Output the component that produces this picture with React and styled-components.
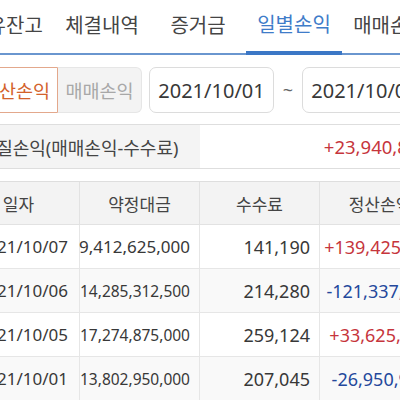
import React from 'react'
import styled, { createGlobalStyle } from 'styled-components'

const GlobalStyle = createGlobalStyle`
  *, *::before, *::after {
    box-sizing: border-box;
  }
  body {
    margin: 0;
    background: #fff;
    font-family: "Noto Sans", "Noto Sans CJK KR", sans-serif;
  }
`

const tabs = ['보유잔고', '체결내역', '증거금', '일별손익', '매매손익']

const rows = [
  { date: '2021/10/07', amount: '9,412,625,000', amountSize: 17, fee: '141,190', pnl: '+139,425,310', up: true },
  { date: '2021/10/06', amount: '14,285,312,500', amountSize: 15.5, fee: '214,280', pnl: '-121,337,460', up: false },
  { date: '2021/10/05', amount: '17,274,875,000', amountSize: 15.5, fee: '259,124', pnl: '+33,625,876', up: true },
  { date: '2021/10/01', amount: '13,802,950,000', amountSize: 15.5, fee: '207,045', pnl: '-26,950,955', up: false },
]

export default function App() {
  return (
    <Viewport>
      <GlobalStyle />
      <Screen>
        <TabBar>
          {tabs.map(t => (
            <Tab key={t} active={t === '일별손익'}>{t}</Tab>
          ))}
        </TabBar>

        <Controls>
          <Segment>
            <SegButton active>정산손익</SegButton>
            <SegButton>매매손익</SegButton>
          </Segment>
          <DateBox>2021/10/01</DateBox>
          <Tilde>~</Tilde>
          <DateBox>2021/10/07</DateBox>
        </Controls>

        <Summary>
          <SummaryLabel>실질손익(매매손익-수수료)</SummaryLabel>
          <SummaryValue>+23,940,843</SummaryValue>
        </Summary>

        <Table>
          <HeadRow>
            <HeadCell>일자</HeadCell>
            <HeadCell>약정대금</HeadCell>
            <HeadCell>수수료</HeadCell>
            <HeadCell>정산손익</HeadCell>
          </HeadRow>
          {rows.map((r, i) => (
            <Row key={r.date} shade={i % 2 === 1}>
              <DateCell>{r.date}</DateCell>
              <NumCell size={r.amountSize}>{r.amount}</NumCell>
              <NumCell size={18}>{r.fee}</NumCell>
              <PnlCell up={r.up}>{r.pnl}</PnlCell>
            </Row>
          ))}
        </Table>
      </Screen>
    </Viewport>
  )
}

const Viewport = styled.div`
  width: 400px;
  height: 400px;
  overflow: hidden;
`

const Screen = styled.div`
  width: 482px;
  margin-left: -42px;
  display: flex;
  flex-direction: column;
`

const TabBar = styled.div`
  display: flex;
  height: 55px;
`

const Tab = styled.div`
  width: 96px;
  flex: none;
  display: flex;
  align-items: center;
  justify-content: center;
  padding-bottom: 5px;
  font-size: 20px;
  color: ${props => props.active ? '#3f7cc9' : '#454545'};
  border-bottom: ${props => props.active ? '4px solid #3b77c6' : '2px solid #6a96cf'};
`

const Controls = styled.div`
  display: flex;
  align-items: center;
  gap: 7px;
  height: 46px;
  margin-top: 12px;
  padding-left: 16px;
`

const Segment = styled.div`
  display: flex;
  height: 100%;
`

const SegButton = styled.div`
  width: 84px;
  display: flex;
  align-items: center;
  justify-content: center;
  font-size: 18.5px;
  background: ${props => props.active ? '#fff' : '#f3f3f3'};
  color: ${props => props.active ? '#d3622c' : '#a8a8a8'};
  border: 1px solid ${props => props.active ? '#e3a88c' : '#e6e6e6'};
  border-radius: ${props => props.active ? '6px 0 0 6px' : '0 6px 6px 0'};
  border-left-width: ${props => props.active ? '1px' : '0'};
`

const DateBox = styled.div`
  width: 125px;
  height: 100%;
  display: flex;
  align-items: center;
  justify-content: center;
  border: 1px solid #dcdcdc;
  border-radius: 7px;
  font-size: 20px;
  color: #383838;
`

const Tilde = styled.div`
  width: 14px;
  text-align: center;
  font-size: 18px;
  color: #666;
`

const Summary = styled.div`
  display: flex;
  height: 45px;
  margin-top: 11px;
  border-top: 1px solid #dedede;
  border-bottom: 1px solid #dedede;
`

const SummaryLabel = styled.div`
  width: 242px;
  flex: none;
  display: flex;
  align-items: center;
  justify-content: center;
  background: #f4f4f4;
  font-size: 18px;
  color: #444;
`

const SummaryValue = styled.div`
  flex: 1;
  display: flex;
  align-items: center;
  justify-content: flex-end;
  padding-right: 11px;
  font-size: 18.5px;
  color: #c6353c;
`

const Table = styled.div`
  display: flex;
  flex-direction: column;
  margin-top: 12px;
  border-top: 1px solid #dedede;
`

const HeadRow = styled.div`
  display: grid;
  grid-template-columns: 121px 120px 120px 121px;
  height: 43px;
  background: #f3f3f3;
  border-bottom: 1px solid #e2e2e2;
`

const HeadCell = styled.div`
  display: flex;
  align-items: center;
  justify-content: center;
  font-size: 17px;
  color: #444;
  & + & {
    border-left: 1px solid #e2e2e2;
  }
`

const Row = styled.div`
  display: grid;
  grid-template-columns: 121px 120px 120px 121px;
  height: 44px;
  background: ${props => props.shade ? '#f9f9f9' : '#fff'};
  border-bottom: 1px solid #e6e6e6;
`

const Cell = styled.div`
  display: flex;
  align-items: center;
  justify-content: flex-end;
  padding-right: 9px;
  white-space: nowrap;
  color: #383838;
  & + & {
    border-left: 1px solid #e6e6e6;
  }
`

const DateCell = styled(Cell)`
  font-size: 17px;
  padding-right: 11px;
`

const NumCell = styled(Cell)`
  font-size: ${props => props.size}px;
`

const PnlCell = styled(Cell)`
  font-size: 18px;
  justify-content: center;
  padding: 0 0 0 1px;
  color: ${props => props.up ? '#c6353c' : '#24489c'};
`
